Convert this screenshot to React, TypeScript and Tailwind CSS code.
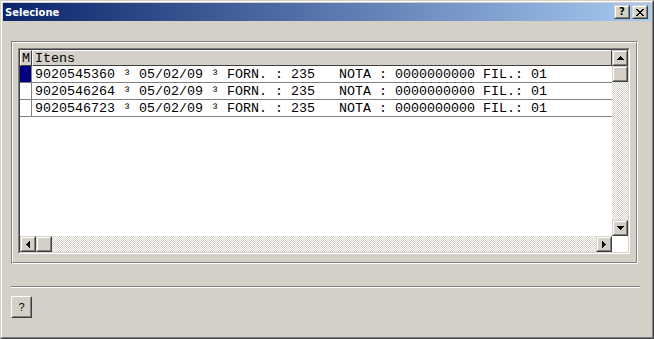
import type { ReactNode } from "react";

const ITENS = [
  { id: "9020545360", marked: true },
  { id: "9020546264", marked: false },
  { id: "9020546723", marked: false },
];

const MONO = "font-['Liberation_Mono','Courier_New',monospace] text-[13.333px] leading-none";

function Bevel({ className = "", children }: { className?: string; children?: ReactNode }) {
  return (
    <div className={`border border-t-[#d4d0c8] border-l-[#d4d0c8] border-r-[#404040] border-b-[#404040] ${className}`}>
      <div className="flex h-full w-full items-center justify-center border border-t-white border-l-white border-r-[#808080] border-b-[#808080] bg-[#d4d0c8]">
        {children}
      </div>
    </div>
  );
}

function Arrow({ dir }: { dir: "up" | "down" | "left" | "right" }) {
  const rows = [
    [3, 1],
    [2, 3],
    [1, 5],
    [0, 7],
  ];
  const vertical = dir === "up" || dir === "down";
  return (
    <svg width={vertical ? 7 : 4} height={vertical ? 4 : 7} shapeRendering="crispEdges">
      {rows.map(([o, len], i) => {
        const k = dir === "up" || dir === "left" ? i : 3 - i;
        return vertical ? (
          <rect key={i} x={o} y={k} width={len} height={1} fill="#000" />
        ) : (
          <rect key={i} x={k} y={o} width={1} height={len} fill="#000" />
        );
      })}
    </svg>
  );
}

function CloseGlyph() {
  const px = [
    [0, 0], [1, 0], [6, 0], [7, 0],
    [1, 1], [2, 1], [5, 1], [6, 1],
    [2, 2], [3, 2], [4, 2], [5, 2],
    [3, 3], [4, 3],
    [2, 4], [3, 4], [4, 4], [5, 4],
    [1, 5], [2, 5], [5, 5], [6, 5],
    [0, 6], [1, 6], [6, 6], [7, 6],
  ];
  return (
    <svg width="8" height="7" shapeRendering="crispEdges">
      {px.map(([x, y]) => (
        <rect key={`${x}-${y}`} x={x} y={y} width={1} height={1} fill="#000" />
      ))}
    </svg>
  );
}

const track = "bg-[repeating-conic-gradient(#d4d0c8_0_25%,#ffffff_0_50%)] bg-[length:2px_2px]";

export default function App() {
  return (
    <div className="h-[339px] w-[654px] border border-t-[#d4d0c8] border-l-[#d4d0c8] border-r-[#404040] border-b-[#404040] bg-[#d4d0c8]">
      <div className="flex h-full flex-col border border-t-white border-l-white border-r-[#808080] border-b-[#808080] p-px">
        {/* title bar */}
        <div className="flex h-[18px] items-center bg-[linear-gradient(to_right,#0a246a,#a6caf0)] pl-[2px] pr-[3px]">
          <span className="font-['DejaVu_Sans',Verdana,sans-serif] text-[10px] font-bold text-white">Selecione</span>
          <div className="ml-auto flex gap-[2px]">
            <Bevel className="h-[14px] w-[16px]">
              <span className="font-['DejaVu_Sans',sans-serif] text-[10px] leading-none font-bold text-black">?</span>
            </Bevel>
            <Bevel className="h-[14px] w-[16px]">
              <CloseGlyph />
            </Bevel>
          </div>
        </div>

        {/* body */}
        <div className="flex flex-1 flex-col">
          <div className="ml-[8px] mt-[20px] h-[223px] w-[627px] border border-t-[#808080] border-l-[#808080] border-r-white border-b-white">
            <div className="h-full w-full border border-t-white border-l-white border-r-[#808080] border-b-[#808080] pl-[5px] pt-[5px]">
              {/* grid */}
              <div className="h-[206px] w-[612px] border border-t-[#808080] border-l-[#808080] border-r-white border-b-white">
                <div className="flex h-full w-full flex-col border border-t-[#404040] border-l-[#404040] border-r-[#d4d0c8] border-b-[#d4d0c8]">
                  <div className="flex flex-1">
                    <div className={`flex-1 bg-white text-black ${MONO}`}>
                      <div className="flex h-[16px]">
                        <div className="flex w-[12px] items-center justify-center border border-t-white border-l-white border-r-[#404040] border-b-[#404040] bg-[#d4d0c8] pt-px">
                          M
                        </div>
                        <div className="flex flex-1 items-center border border-t-white border-l-white border-r-[#404040] border-b-[#404040] bg-[#d4d0c8] pl-[2px] pt-px">
                          Itens
                        </div>
                      </div>
                      {ITENS.map((it) => (
                        <div key={it.id} className="flex h-[17px] border-b border-b-[#808080]">
                          <div className={`w-[12px] border-r border-r-[#808080] ${it.marked ? "bg-[#000080]" : "bg-white"}`} />
                          <div className="flex flex-1 items-center whitespace-pre pl-[3px] pt-[2px]">
                            {`${it.id} ³ 05/02/09 ³ FORN. : 235   NOTA : 0000000000 FIL.: 01`}
                          </div>
                        </div>
                      ))}
                    </div>
                    {/* vertical scrollbar */}
                    <div className="flex w-[16px] flex-col">
                      <Bevel className="h-[16px]">
                        <Arrow dir="up" />
                      </Bevel>
                      <Bevel className="h-[16px]" />
                      <div className={`flex-1 ${track}`} />
                      <Bevel className="h-[16px]">
                        <Arrow dir="down" />
                      </Bevel>
                    </div>
                  </div>
                  {/* horizontal scrollbar */}
                  <div className="flex h-[16px]">
                    <Bevel className="w-[16px]">
                      <Arrow dir="left" />
                    </Bevel>
                    <Bevel className="w-[16px]" />
                    <div className={`flex-1 ${track}`} />
                    <Bevel className="w-[16px]">
                      <Arrow dir="right" />
                    </Bevel>
                    <div className="w-[16px] bg-white" />
                  </div>
                </div>
              </div>
            </div>
          </div>

          <div className="ml-[8px] mt-[22px] h-[2px] w-[629px] border-t border-b border-t-[#808080] border-b-white" />

          <div className="ml-[8px] mt-[8px] h-[22px] w-[21px] border border-t-white border-l-white border-r-[#404040] border-b-[#404040]">
            <div className="flex h-full w-full items-center justify-center border border-t-[#d4d0c8] border-l-[#d4d0c8] border-r-[#808080] border-b-[#808080] font-['Liberation_Sans',Arial,sans-serif] text-[11px] text-black">
              ?
            </div>
          </div>
        </div>
      </div>
    </div>
  );
}
